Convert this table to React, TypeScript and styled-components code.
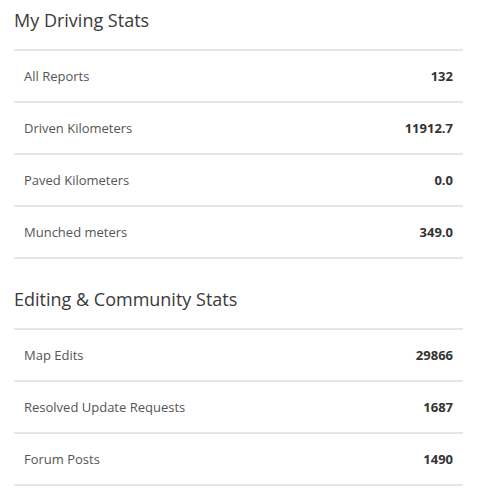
import React, { FunctionComponent } from 'react';
import styled, { createGlobalStyle } from 'styled-components';

interface StatRow {
  label: string;
  value: string;
}

interface StatSection {
  title: string;
  rows: StatRow[];
}

const sections: StatSection[] = [
  {
    title: 'My Driving Stats',
    rows: [
      { label: 'All Reports', value: '132' },
      { label: 'Driven Kilometers', value: '11912.7' },
      { label: 'Paved Kilometers', value: '0.0' },
      { label: 'Munched meters', value: '349.0' },
    ],
  },
  {
    title: 'Editing & Community Stats',
    rows: [
      { label: 'Map Edits', value: '29866' },
      { label: 'Resolved Update Requests', value: '1687' },
      { label: 'Forum Posts', value: '1490' },
    ],
  },
];

const GlobalStyle = createGlobalStyle`
  body {
    margin: 0;
    background: #ffffff;
    font-family: 'Open Sans', 'Noto Sans', Arial, sans-serif;
  }
`;

const StyledPage = styled.div`
  width: 449px;
  padding: 8px 22px 0 14px;
`;

const StyledSection = styled.section`
  & + & {
    margin-top: 28px;
  }
`;

const StyledTitle = styled.h2`
  margin: 0 0 16px;
  font-size: 18px;
  font-weight: 400;
  line-height: 25px;
  color: #3a3a3a;
`;

const StyledTable = styled.div`
  display: flex;
  flex-direction: column;
  border-top: 2px solid #e6e6e6;
`;

const StyledRow = styled.div`
  display: flex;
  justify-content: space-between;
  align-items: center;
  height: 50px;
  padding: 0 10px;
  border-bottom: 2px solid #e6e6e6;
  font-size: 13px;
`;

const StyledLabel = styled.span`
  color: #555555;
`;

const StyledValue = styled.span`
  color: #333333;
  font-weight: 700;
`;

const App: FunctionComponent = () => {
  return (
    <>
      <GlobalStyle />
      <StyledPage>
        {sections.map((section) => (
          <StyledSection key={section.title}>
            <StyledTitle>{section.title}</StyledTitle>
            <StyledTable>
              {section.rows.map((row) => (
                <StyledRow key={row.label}>
                  <StyledLabel>{row.label}</StyledLabel>
                  <StyledValue>{row.value}</StyledValue>
                </StyledRow>
              ))}
            </StyledTable>
          </StyledSection>
        ))}
      </StyledPage>
    </>
  );
};

export default App;
